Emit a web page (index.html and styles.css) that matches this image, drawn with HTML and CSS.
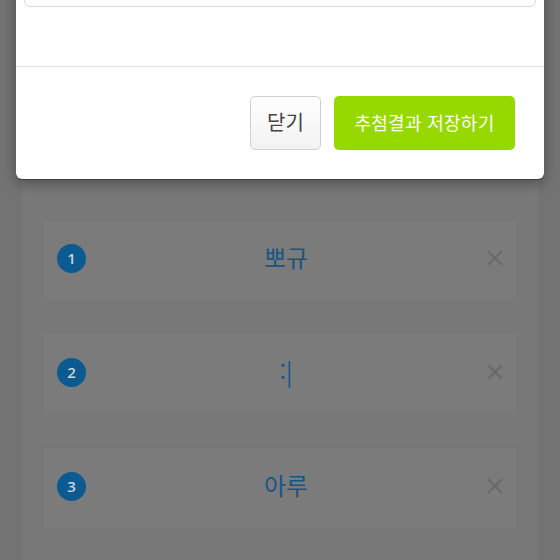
FILE: index.html
```html
<!DOCTYPE html>
<html lang="ko">
<head>
  <meta charset="UTF-8" />
  <meta name="viewport" content="width=device-width, initial-scale=1" />
  <title>추첨 결과</title>
  <link rel="stylesheet" href="styles.css">
</head>
<body>
  <main class="page">
    <ul class="winners">
      <li class="winner">
        <span class="rank">1</span>
        <span class="name">뽀규</span>
        <svg class="remove" viewBox="0 0 18 18" aria-label="삭제"><path d="M2 2 L16 16 M16 2 L2 16" /></svg>
      </li>
      <li class="winner">
        <span class="rank">2</span>
        <span class="name">:|</span>
        <svg class="remove" viewBox="0 0 18 18" aria-label="삭제"><path d="M2 2 L16 16 M16 2 L2 16" /></svg>
      </li>
      <li class="winner">
        <span class="rank">3</span>
        <span class="name">아루</span>
        <svg class="remove" viewBox="0 0 18 18" aria-label="삭제"><path d="M2 2 L16 16 M16 2 L2 16" /></svg>
      </li>
    </ul>
  </main>

  <div class="modal" role="dialog">
    <div class="modal-body">
      <div class="field"></div>
    </div>
    <div class="modal-footer">
      <button class="btn">닫기</button>
      <button class="btn btn-save">추첨결과 저장하기</button>
    </div>
  </div>
</body>
</html>
```

FILE: styles.css
```css
*, *::before, *::after {
  box-sizing: border-box;
}
html, body {
  margin: 0;
  padding: 0;
  height: 100%;
  overflow: hidden;
}
body {
  background: #737373;
  font-family: "Noto Sans CJK KR", "Noto Sans", sans-serif;
  position: relative;
}

/* page under the overlay */
.page {
  margin: 0 22px;
  min-height: 560px;
  background: #787878;
  padding: 219px 22px 0;
}
.winners {
  list-style: none;
  margin: 0;
  padding: 0;
  display: flex;
  flex-direction: column;
  gap: 33px;
}
.winner {
  height: 81px;
  background: #7b7b7b;
  border-top: 1px solid #757575;
  display: flex;
  align-items: center;
  padding: 0 12px 4px 13px;
}
.rank {
  width: 29px;
  height: 29px;
  border-radius: 50%;
  background: #0b5b90;
  color: #c9d3dc;
  font-family: "Open Sans", sans-serif;
  font-weight: 600;
  font-size: 15px;
  display: flex;
  align-items: center;
  justify-content: center;
}
.name {
  flex: 1;
  text-align: center;
  color: #175683;
  font-size: 24px;
  line-height: 1;
  margin-top: -3px;
}
.remove {
  width: 18px;
  height: 18px;
  fill: none;
  stroke: #696969;
  stroke-width: 2;
}

/* modal */
.modal {
  position: absolute;
  top: -50px;
  left: 16px;
  right: 16px;
  background: #fff;
  border-radius: 6px;
  box-shadow: 0 1px 0 #3c3c3c, 0 4px 14px rgba(0, 0, 0, 0.35);
}
.modal-body {
  padding: 8px 8px 59px;
}
.field {
  height: 49px;
  border: 1px solid #d9d9d9;
  border-radius: 6px;
}
.modal-footer {
  border-top: 1px solid #e3e3e3;
  padding: 29px 29px;
  display: flex;
  justify-content: flex-end;
  gap: 13px;
}
.btn {
  height: 54px;
  width: 71px;
  padding: 0 0 3px;
  border: 1px solid #cfcfcf;
  border-radius: 5px;
  background: linear-gradient(#fff, #f2f2f2);
  color: #444;
  font-family: inherit;
  font-size: 20px;
  white-space: nowrap;
}
.btn-save {
  width: 181px;
  border: none;
  background: #95d900;
  color: #fff;
  font-size: 18px;
  letter-spacing: 0.3px;
}
```
